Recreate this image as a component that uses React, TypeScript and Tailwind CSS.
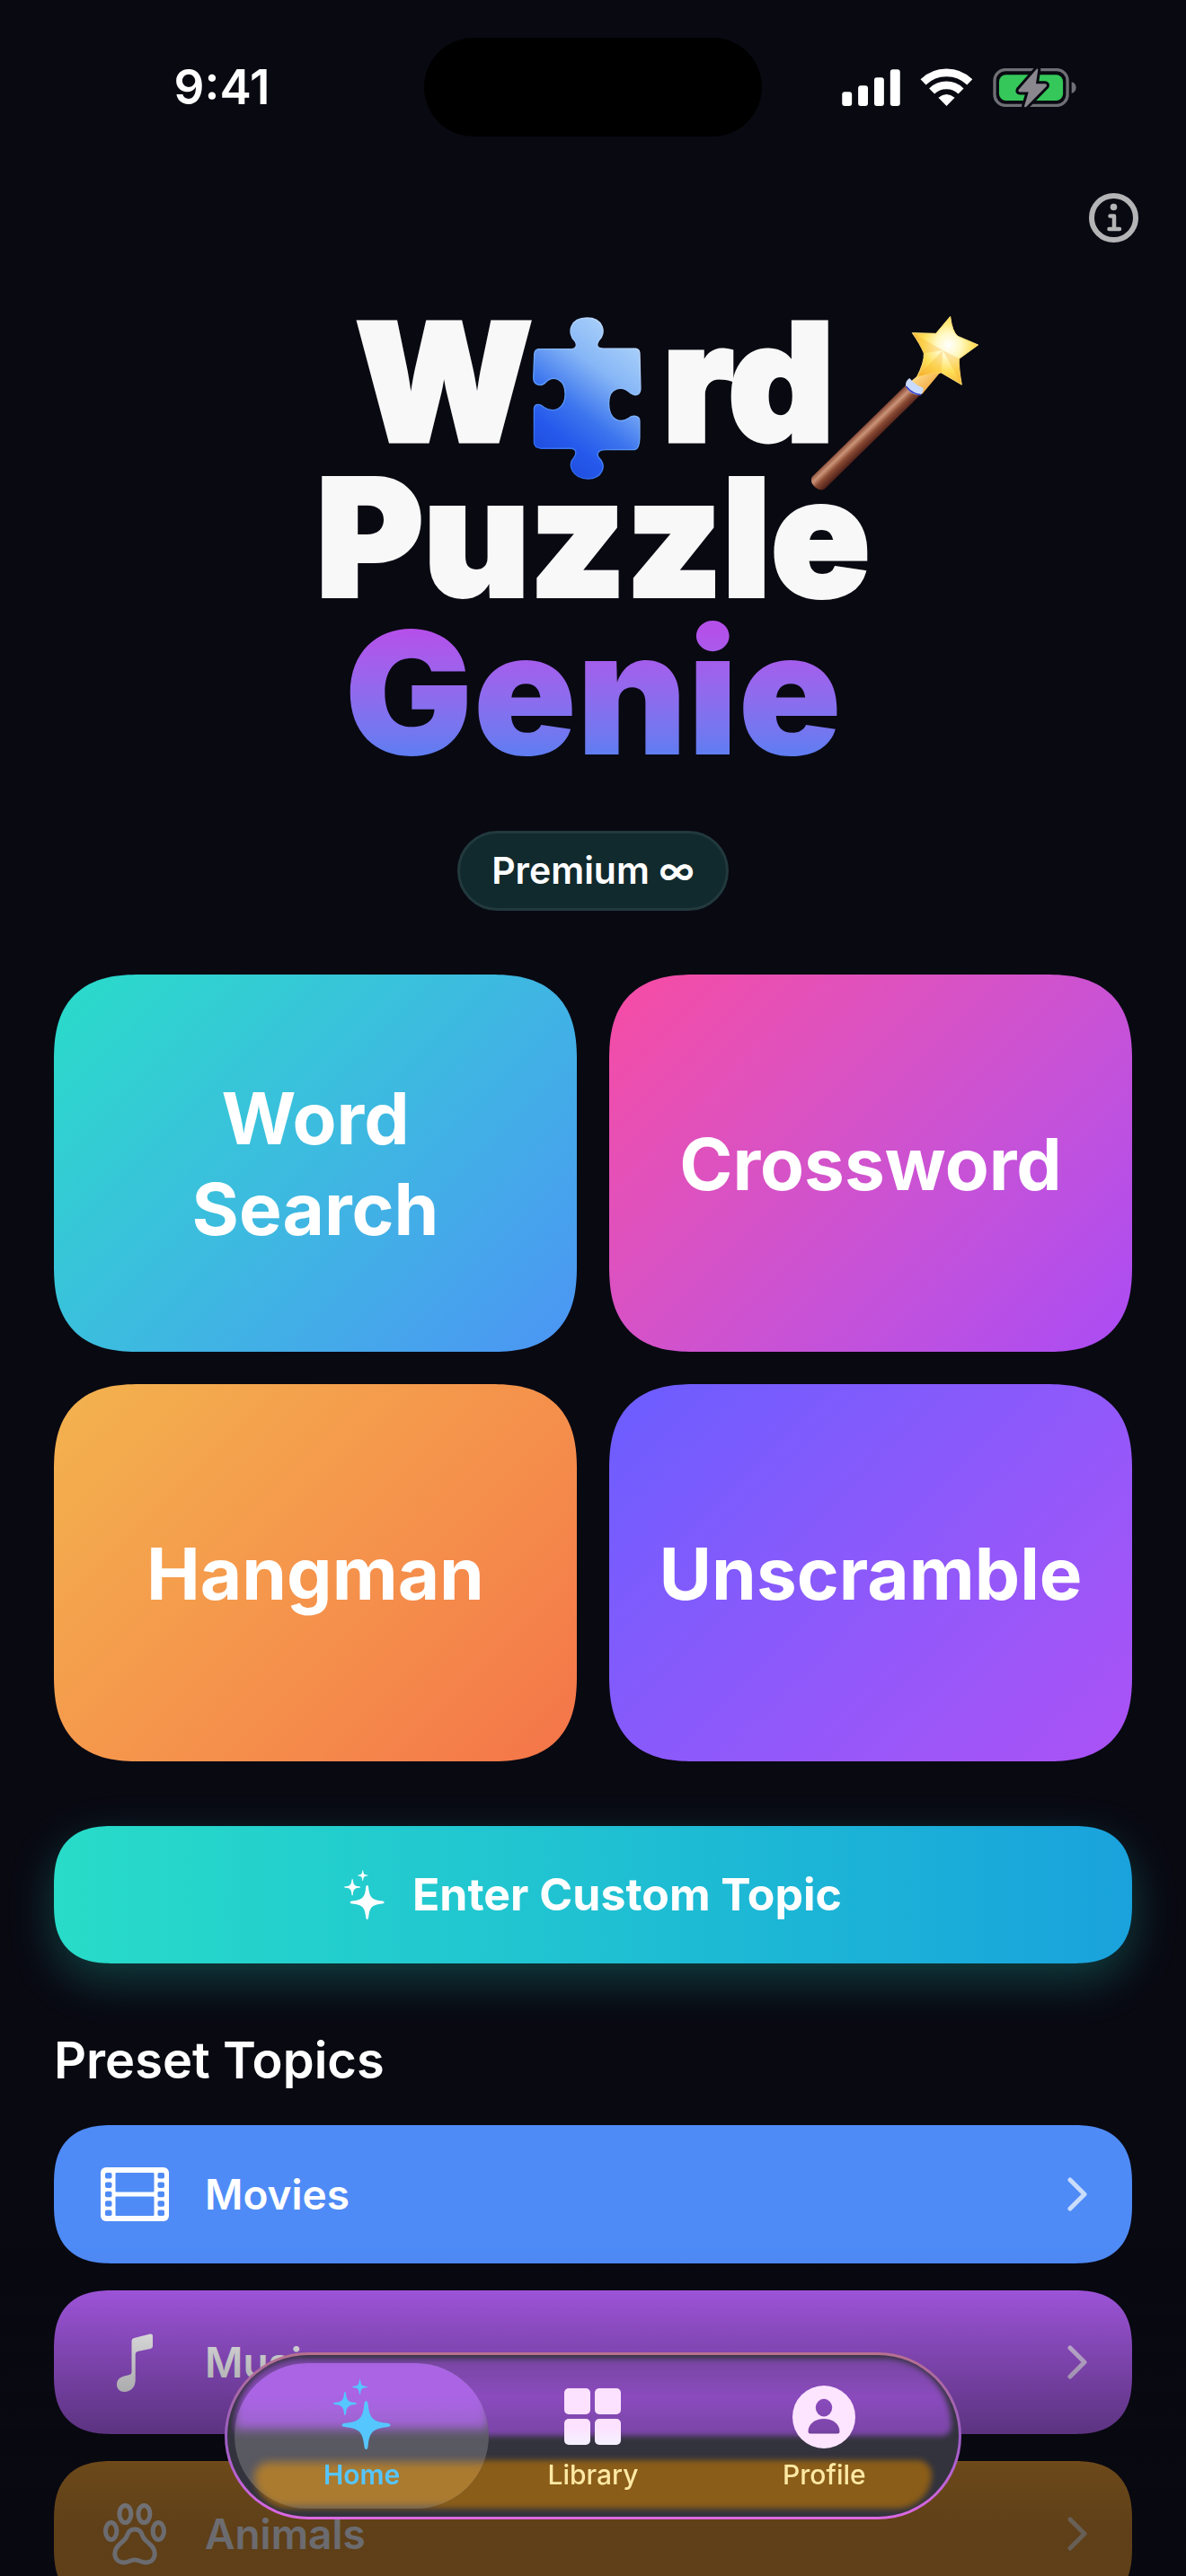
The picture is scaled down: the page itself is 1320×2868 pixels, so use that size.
import type { ReactNode } from 'react';

interface Game {
    name: string;
    colors: string;
}

interface Topic {
    name: string;
    color: string;
    height: string;
    icon: ReactNode;
}

const STAR = 'M0 -27C1.6 -27 2 -25 2.4 -21C4 -8 8 -4 21 -2.4C25 -2 27 -1.6 27 0C27 1.6 25 2 21 2.4C8 4 4 8 2.4 21C2 25 1.6 27 0 27C-1.6 27 -2 25 -2.4 21C-4 8 -8 4 -21 2.4C-25 2 -27 1.6 -27 0C-27 -1.6 -25 -2 -21 -2.4C-8 -4 -4 -8 -2.4 -21C-2 -25 -1.6 -27 0 -27Z';

function SparklesIcon({ className }: { className: string }) {
    return (
        <svg viewBox="0 0 64 78" fill="currentColor" className={className} aria-hidden="true">
            <path d={STAR} transform="translate(36.5 51)" />
            <path d={STAR} transform="translate(13 27) scale(0.48)" />
            <path d={STAR} transform="translate(29.5 8.5) scale(0.31)" />
        </svg>
    );
}

function SignalIcon() {
    return (
        <svg viewBox="51 44 195 130" className="h-[43px] w-[65px] text-white" fill="currentColor" aria-hidden="true">
            <rect x="51" y="123" width="33" height="48" rx="9" />
            <rect x="105" y="102" width="33" height="69" rx="9" />
            <rect x="159" y="75" width="33" height="96" rx="9" />
            <rect x="213" y="48" width="33" height="123" rx="9" />
        </svg>
    );
}

function WifiIcon() {
    return (
        <svg viewBox="312 44 177 130" className="h-[43px] w-[59px]" fill="none" stroke="white" strokeWidth="26" aria-hidden="true">
            <path d="M322 90.500A112.500 112.500 0 0 1 478.500 90.500" />
            <path d="M351 121A70 70 0 0 1 449 121" />
            <path d="M400.500 171L373 143Q400 121 428 143Z" fill="white" stroke="none" />
        </svg>
    );
}

function BatteryIcon() {
    return (
        <svg viewBox="555 41 282 136" className="h-[45px] w-[94px]" aria-hidden="true">
            <rect x="560" y="49" width="245" height="120" rx="36" fill="none" stroke="#6f6f75" strokeWidth="10" />
            <path d="M819 90C839 94 839 124 819 129Z" fill="#6f6f75" />
            <rect x="575" y="66" width="215" height="87" rx="23" fill="#35c759" />
            <path
                d="M703 45L641 116Q637 124 646 124H674L660 171Q660 177 666 174L734 105Q738 97 729 96H699L706 48Z"
                fill="#8a888e"
                stroke="#090912"
                strokeWidth="18"
                strokeLinejoin="round"
                paintOrder="stroke"
            />
        </svg>
    );
}

function InfoIcon() {
    return (
        <svg viewBox="0 0 55 55" className="size-[55px]" fill="none" stroke="#b4b4b6" aria-hidden="true">
            <circle cx="27.500" cy="27.500" r="24.500" strokeWidth="6" />
            <circle cx="27.500" cy="15.500" r="3.800" fill="#b4b4b6" stroke="none" />
            <path d="M23.500 25.500H28V40M22.500 40H34" strokeWidth="4.500" strokeLinecap="round" strokeLinejoin="round" />
        </svg>
    );
}

function PuzzlePiece() {
    return (
        <svg viewBox="42 38 362 542" className="mt-[14px] h-[181px] w-[121px]" aria-hidden="true">
            <defs>
                <linearGradient id="piece" x1="0.750" y1="0.050" x2="0.300" y2="0.950">
                    <stop offset="0" stopColor="#a9d0fa" />
                    <stop offset="0.300" stopColor="#86b6f6" />
                    <stop offset="0.620" stopColor="#3b74ee" />
                    <stop offset="0.820" stopColor="#265aec" />
                    <stop offset="1" stopColor="#1f4ee0" />
                </linearGradient>
                <linearGradient id="pieceEdge" x1="0.800" y1="0" x2="0.300" y2="1">
                    <stop offset="0" stopColor="#cfe6ff" />
                    <stop offset="0.600" stopColor="#5c9bf8" />
                    <stop offset="1" stopColor="#2a62ee" />
                </linearGradient>
            </defs>
            <path
                d="M60 145H172C188 143 190 130 182 118C155 92 165 41 222 41C278 41 288 92 262 116C252 132 256 142 276 143H385Q397 145 398 158L401 275C401 300 382 302 368 292C340 265 295 270 295 325C295 385 335 392 360 376C375 362 398 368 398 385V440Q397 478 382 480H285C262 480 252 492 262 507C290 530 275 577 225 577C175 577 155 530 178 508C190 492 186 476 168 476H70Q46 474 46 456V345C46 326 66 326 78 338C110 360 150 345 150 295C150 245 110 230 85 255C72 270 44 268 44 240L47 160Q49 147 60 145Z"
                fill="url(#piece)"
                stroke="url(#pieceEdge)"
                strokeWidth="4"
            />
        </svg>
    );
}

function Wand({ className }: { className: string }) {
    return (
        <svg viewBox="30 33 567 588" className={className} aria-hidden="true">
            <defs>
                <linearGradient id="stick" gradientUnits="userSpaceOnUse" x1="195" y1="420" x2="235" y2="462">
                    <stop offset="0" stopColor="#8a4c38" />
                    <stop offset="0.300" stopColor="#cb9478" />
                    <stop offset="0.600" stopColor="#8a4a33" />
                    <stop offset="1" stopColor="#52231a" />
                </linearGradient>
                <linearGradient id="neck" x1="0" y1="0" x2="1" y2="0.800">
                    <stop offset="0" stopColor="#ffe9a0" />
                    <stop offset="1" stopColor="#f09a28" />
                </linearGradient>
                <radialGradient id="star" cx="0.550" cy="0.420" r="0.600">
                    <stop offset="0" stopColor="#ffffff" />
                    <stop offset="0.300" stopColor="#fff9c4" />
                    <stop offset="0.650" stopColor="#ffdf58" />
                    <stop offset="1" stopColor="#f8b93a" />
                </radialGradient>
            </defs>
            <path d="M352 266L400 299L84 610Q70 624 50 608Q30 592 38 573Z" fill="url(#stick)" />
            <path d="M392 234L466 224L406 296L366 256Z" fill="url(#neck)" />
            <path d="M364 243Q345 256 354 276Q370 300 400 300Q410 292 410 276Q385 268 364 243Z" fill="#c9dbff" />
            <path d="M354 272Q370 294 400 299" fill="none" stroke="#3a41c4" strokeWidth="5" strokeLinecap="round" />
            <path d="M500 37Q506 88 525 103L593 132L530 178Q526 200 538 265L470 225Q440 226 388 240Q414 190 412 160Q400 130 373 92L452 94Z" fill="url(#star)" stroke="#ffe27a" strokeWidth="3" strokeLinejoin="round" />
            <path d="M373 92L475 150L412 160Z M388 240L475 150L470 225Z M538 265L475 150L530 178Z" fill="#f6a928" opacity="0.280" />
        </svg>
    );
}

function FilmIcon() {
    const rows = [0, 1, 2, 3, 4];
    return (
        <svg viewBox="0 0 76 60" className="h-[60px] w-[76px]" aria-hidden="true">
            <mask id="film">
                <rect width="76" height="60" rx="6" fill="white" />
                <rect x="16.500" y="6" width="43" height="21.500" rx="1" />
                <rect x="16.500" y="32.500" width="43" height="21.500" rx="1" />
                {rows.map((row) => (
                    <g key={row}>
                        <rect x="5" y={6 + row * 10.4} width="7.500" height="6.500" rx="1.800" />
                        <rect x="63.500" y={6 + row * 10.4} width="7.500" height="6.500" rx="1.800" />
                    </g>
                ))}
            </mask>
            <rect width="76" height="60" fill="white" mask="url(#film)" />
        </svg>
    );
}

function NoteIcon() {
    return (
        <svg viewBox="0 0 40 65" className="h-[65px] w-[40px]" fill="white" aria-hidden="true">
            <path d="M16.500 9Q16.500 5.500 19.500 5L37 .500Q40 0 40 2.800V14Q40 16.400 37.500 17L23 20Q20.700 20.800 20.700 23V52C20.700 60 15 65 8.500 65C3.500 65 0 61.500 0 57C0 51 4 48.500 9 47.300L14 46Q16.500 45.300 16.500 43Z" />
        </svg>
    );
}

function PawIcon() {
    return (
        <svg viewBox="0 0 70 69" className="h-[69px] w-[70px]" fill="none" stroke="white" strokeWidth="5" aria-hidden="true">
            <ellipse cx="24.400" cy="12" rx="6.500" ry="9.500" />
            <ellipse cx="45.400" cy="12" rx="6.500" ry="9.500" />
            <ellipse cx="8.700" cy="31" rx="6.200" ry="9.500" />
            <ellipse cx="61.300" cy="31" rx="6.200" ry="9.500" />
            <path d="M35 29C29 29 27.500 33 26 37C23.500 43.500 12.800 46 12.800 56C12.800 62 17 66 23 66C28 66 30 63 35 63C40 63 42 66 47 66C53 66 57.200 62 57.200 56C57.200 46 46.500 43.500 44 37C42.500 33 41 29 35 29Z" />
        </svg>
    );
}

function ChevronIcon() {
    return (
        <svg viewBox="0 0 22 38" className="h-[38px] w-[22px]" fill="none" stroke="white" strokeOpacity="0.700" strokeWidth="5" strokeLinecap="round" strokeLinejoin="round" aria-hidden="true">
            <path d="M3 3L19 19L3 35" />
        </svg>
    );
}

function LibraryIcon() {
    return (
        <svg viewBox="0 0 63 63" className="size-[63px]" fill="url(#glassFill)" aria-hidden="true">
            <defs>
                <linearGradient id="glassFill" gradientUnits="userSpaceOnUse" x1="0" y1="0" x2="0" y2="63">
                    <stop offset="0.700" stopColor="#fde2ff" />
                    <stop offset="1" stopColor="#f3f2ff" />
                </linearGradient>
            </defs>
            <rect width="29" height="29" rx="5" />
            <rect x="34" width="29" height="29" rx="5" />
            <rect y="34" width="29" height="29" rx="5" />
            <rect x="34" y="34" width="29" height="29" rx="5" />
        </svg>
    );
}

function ProfileIcon() {
    return (
        <svg viewBox="0 0 70 70" className="size-[70px]" aria-hidden="true">
            <mask id="person">
                <circle cx="35" cy="35" r="35" fill="white" />
                <ellipse cx="35" cy="24.600" rx="9.200" ry="9.800" />
                <path d="M17.500 51C17.500 43 25 37 35 37C45 37 52.500 43 52.500 51Q52.500 53.500 50 53.500H20Q17.500 53.500 17.500 51Z" />
            </mask>
            <rect width="70" height="70" fill="#fde4ff" mask="url(#person)" />
        </svg>
    );
}

const games: Game[] = [
    { name: 'Word Search', colors: 'from-[#28dcc8] to-[#4c94f4]' },
    { name: 'Crossword', colors: 'from-[#f74ba3] to-[#aa4bf5]' },
    { name: 'Hangman', colors: 'from-[#f3b34e] to-[#f47449]' },
    { name: 'Unscramble', colors: 'from-[#6b5dff] to-[#ab52f6]' },
];

const topics: Topic[] = [
    { name: 'Movies', color: 'bg-[#4f8bf6]', height: 'h-[154px]', icon: <FilmIcon /> },
    { name: 'Music', color: 'bg-[#a257df]', height: 'h-[160px]', icon: <NoteIcon /> },
    { name: 'Animals', color: 'bg-[#de9226]', height: 'h-[162px]', icon: <PawIcon /> },
];

function StatusBar() {
    return (
        <div className="grid grid-cols-[1fr_376px_1fr] items-center pt-[42px]">
            <div className="flex justify-center pl-[22px]">
                <time className="text-[53px] leading-none font-semibold">9:41</time>
            </div>
            <div className="h-[110px] rounded-full bg-black" />
            <div className="flex items-center justify-center gap-[22px] pr-[32px]">
                <SignalIcon />
                <WifiIcon />
                <BatteryIcon />
            </div>
        </div>
    );
}

function Logo() {
    return (
        <h1
            aria-label="Word Puzzle Genie"
            className="relative mx-auto w-[620px] text-center text-[182px] leading-[173px] font-black text-[#f8f8f8]"
        >
            <span className="flex h-[173px] items-start justify-center pl-[4px] [-webkit-text-stroke:5px_#f8f8f8]">
                <span>W</span>
                <PuzzlePiece />
                <span className="pl-[24px]">rd</span>
            </span>
            <span className="block [-webkit-text-stroke:4px_#f8f8f8]">Puzzle</span>
            <span className="block bg-linear-to-b from-[#b450ea] from-10% to-[#5f7df1] to-90% bg-clip-text text-[190px] text-transparent">Genie</span>
            <Wand className="absolute top-[12px] -right-[120px] h-[196px] w-[189px]" />
        </h1>
    );
}

function TopicRow({ topic }: { topic: Topic }) {
    return (
        <li>
            <button
                type="button"
                className={`flex w-full items-center rounded-[66px] pr-[50px] pl-[48px] text-left [corner-shape:superellipse(1.35)] ${topic.color} ${topic.height}`}
            >
                <span className="flex w-[84px] justify-center">{topic.icon}</span>
                <span className="flex-1 pl-[36px] text-[46px] font-semibold">{topic.name}</span>
                <ChevronIcon />
            </button>
        </li>
    );
}

function TabBar() {
    return (
        <nav className="fixed bottom-[63px] left-1/2 h-[186px] w-[820px] -translate-x-1/2 rounded-full bg-linear-to-b from-[#b8708f] via-[#9a5cc4] to-[#dd68e4] p-[3px]">
            <div className="relative h-full overflow-hidden rounded-full bg-[#33333d]">
                {/* rows glowing through the glass */}
                <div className="absolute inset-x-[8px] top-[4px] h-[86px] rounded-t-[84px] rounded-b-[12px] bg-linear-to-b from-[#7846a3] via-[#8b4bbe] to-[#7a45a6] blur-[3px]" />
                <div className="absolute inset-x-[30px] bottom-[9px] h-[54px] rounded-t-[20px] rounded-b-[48px] bg-[#8a5d18] blur-[3px]" />

                <div className="relative grid h-full grid-cols-3 px-[21px]">
                    <a href="#home" aria-current="page" className="relative flex flex-col items-center text-[#56c6ff]">
                        <span className="absolute -inset-x-[13px] inset-y-[9px] overflow-hidden rounded-full bg-[#595962]">
                            <span className="absolute inset-x-0 -top-[10px] h-[84px] bg-linear-to-b from-[#aa64e4] from-60% to-[#9c63cd] blur-[6px]" />
                            <span className="absolute -right-[10px] bottom-[2px] left-[22px] h-[50px] rounded-t-[20px] rounded-b-[40px] bg-[#ab7b30] blur-[5px]" />
                        </span>
                        <span className="relative flex h-[118px] items-end pb-[13px]">
                            <SparklesIcon className="h-[78px] w-[64px]" />
                        </span>
                        <span className="relative text-[30px] leading-[30px] font-semibold">Home</span>
                    </a>
                    <a href="#library" className="flex flex-col items-center text-[#fee9a4]">
                        <span className="flex h-[118px] items-end pb-[18px]">
                            <LibraryIcon />
                        </span>
                        <span className="text-[30px] leading-[30px] font-medium">Library</span>
                    </a>
                    <a href="#profile" className="flex flex-col items-center text-[#fee9a4]">
                        <span className="flex h-[118px] items-end pb-[14px]">
                            <ProfileIcon />
                        </span>
                        <span className="text-[30px] leading-[30px] font-medium">Profile</span>
                    </a>
                </div>
            </div>
        </nav>
    );
}

export default function App() {
    return (
        <div className="h-screen overflow-hidden bg-[#090912] font-['Inter','Liberation_Sans',sans-serif] text-white">
            <StatusBar />
            <header className="flex justify-end px-[53px] pt-[63px]">
                <button type="button" aria-label="About">
                    <InfoIcon />
                </button>
            </header>

            <main className="px-[60px]">
                <div className="pt-[69px]">
                    <Logo />
                </div>

                <div className="flex justify-center pt-[67px]">
                    <span className="flex h-[89px] items-center rounded-full border-3 border-[#22393d] bg-[#112a2d] px-[35px] text-[41px] font-semibold">
                        Premium ∞
                    </span>
                </div>

                <div className="grid grid-cols-2 gap-[36px] pt-[71px]">
                    {games.map((game) => (
                        <button
                            key={game.name}
                            type="button"
                            className={`flex h-[420px] items-center justify-center rounded-[96px] bg-linear-135 px-[48px] text-center text-[80px] leading-[101px] font-bold [corner-shape:superellipse(1.35)] ${game.colors}`}
                        >
                            <span className="max-w-min">{game.name}</span>
                        </button>
                    ))}
                </div>

                <button
                    type="button"
                    className="mt-[72px] flex h-[153px] w-full items-center justify-center gap-[31px] rounded-[66px] bg-linear-to-r from-[#28dcc8] via-[#20c1d2] to-[#1aa2dc] text-[50px] font-bold shadow-[0_18px_50px_rgba(40,220,200,0.26)] [corner-shape:superellipse(1.35)]"
                >
                    <SparklesIcon className="h-[55px] w-[45px]" />
                    Enter Custom Topic
                </button>

                <h2 className="pt-[70px] text-[56px] leading-[76px] font-semibold">Preset Topics</h2>
                <ul className="flex flex-col gap-[30px] pt-[34px]">
                    {topics.map((topic) => (
                        <TopicRow key={topic.name} topic={topic} />
                    ))}
                </ul>
            </main>

            {/* content fades out behind the tab bar */}
            <div className="pointer-events-none fixed inset-x-0 bottom-0 h-[368px] bg-[linear-gradient(to_bottom,rgba(9,9,16,0),rgba(9,9,16,0.04)_14%,rgba(9,9,16,0.25)_35%,rgba(9,9,16,0.46)_57%,rgba(9,9,16,0.54)_68%,rgba(9,9,16,0.6)_86%)]" />
            <TabBar />
        </div>
    );
}
